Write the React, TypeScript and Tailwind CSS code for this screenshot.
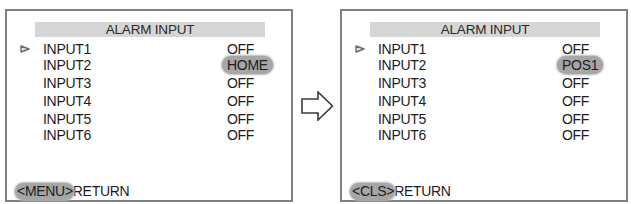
import React from "react";

type Row = { label: string; value: string; h: string; marked?: boolean; hi?: boolean };

const font = { fontFamily: '"Liberation Sans", Arial, sans-serif' };

function rowsFor(second: string): Row[] {
  return [
    { label: "INPUT1", value: "OFF", h: "h-[15px]", marked: true },
    { label: "INPUT2", value: second, h: "h-[18px]", hi: true },
    { label: "INPUT3", value: "OFF", h: "h-[18px]" },
    { label: "INPUT4", value: "OFF", h: "h-[18px]" },
    { label: "INPUT5", value: "OFF", h: "h-[17px]" },
    { label: "INPUT6", value: "OFF", h: "h-[16px]" },
  ];
}

function Marker() {
  // small hollow triangle used as cursor
  return (
    <svg width="10" height="8" viewBox="0 0 10 8" className="block">
      <path d="M1 1 L9 4 L1 7 Z" fill="#e6e6e6" stroke="#6a6a6a" strokeWidth="1.4" strokeLinejoin="round" />
    </svg>
  );
}

function Pill({ children, className = "" }: { children: React.ReactNode; className?: string }) {
  return (
    <span className="relative inline-block">
      <span
        className={`absolute rounded-full bg-[#a6a6a6] shadow-[0_0_2px_1px_#b8b8b8] ${className}`}
      />
      <span className="relative">{children}</span>
    </span>
  );
}

function Screen({ second, back }: { second: string; back: string }) {
  const rows = rowsFor(second);
  return (
    <div className="flex h-[193px] w-[288px] shrink-0 flex-col border-2 border-[#808080] bg-white text-[14px] tracking-[-0.3px] text-[#1c1c1c]">
      <div className="ml-[28px] mt-[11px] h-[15px] w-[230px] bg-[#d6d6d6] text-center text-[13.5px] leading-[16px] tracking-[-0.2px] text-[#2a2a2a]">
        ALARM INPUT
      </div>
      <div className="mt-[4px] flex flex-col">
        {rows.map((r) => (
          <div key={r.label} className={`flex items-center leading-[14px] ${r.h}`}>
            <div className="flex w-[36px] items-center pl-[13px]">{r.marked && <Marker />}</div>
            <div className="w-[184px]">{r.label}</div>
            <div>
              {r.hi ? (
                <Pill className="-left-[5px] -right-[5px] -top-[2px] -bottom-[2px]">{r.value}</Pill>
              ) : (
                r.value
              )}
            </div>
          </div>
        ))}
      </div>
      <div className="mb-[1px] mt-auto h-[15px] pl-[10px] leading-[15px]">
        <Pill className="-left-[2px] -right-[1px] -top-[1px] -bottom-[1px]">&lt;{back}&gt;</Pill>
        RETURN
      </div>
    </div>
  );
}

function RightArrow() {
  return (
    <svg width="33" height="30" viewBox="0 0 33 30" className="block">
      <path
        d="M1 8 L17 8 L17 1 L31.5 15 L17 29 L17 22 L1 22 Z"
        fill="white"
        stroke="#3a3a3a"
        strokeWidth="1.6"
        strokeLinejoin="miter"
      />
    </svg>
  );
}

export default function App() {
  return (
    <div className="h-[204px] w-[631px] overflow-hidden bg-white" style={font}>
      <div className="flex pl-[5px] pt-[9px]">
        <Screen second="HOME" back="MENU" />
        <div className="flex w-[47px] items-center justify-center pl-[2px]">
          <RightArrow />
        </div>
        <Screen second="POS1" back="CLS" />
      </div>
    </div>
  );
}
